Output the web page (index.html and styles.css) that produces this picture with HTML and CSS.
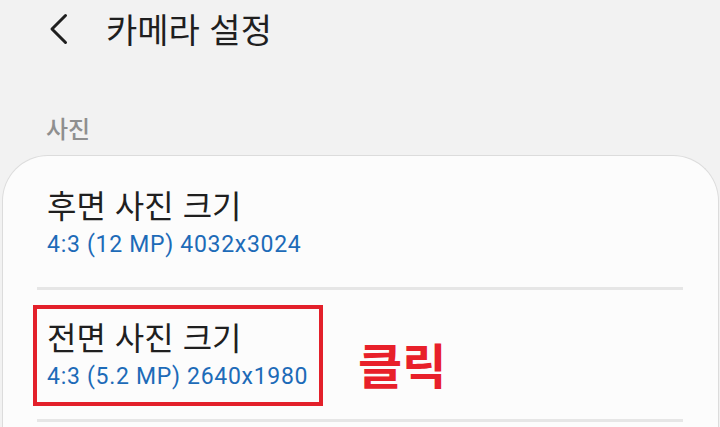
FILE: index.html
```html
<!DOCTYPE html>
<html lang="ko">
<head>
<meta charset="utf-8">
<link rel="stylesheet" href="styles.css">
</head>
<body>
<header class="appbar">
  <svg class="back" width="20" height="32" viewBox="0 0 20 32"><polyline points="16.5,2.5 3,16 16.5,29.5" fill="none" stroke="#1f1f1f" stroke-width="3" stroke-linecap="round" stroke-linejoin="round"/></svg>
  <h1 class="title">카메라 설정</h1>
</header>
<div class="section-label">사진</div>
<div class="card">
  <div class="row row-first">
    <div class="row-title">후면 사진 크기</div>
    <div class="row-sub">4:3 (12 MP) 4032x3024</div>
  </div>
  <div class="divider"></div>
  <div class="row row-second">
    <div class="row-title">전면 사진 크기</div>
    <div class="row-sub">4:3 (5.2 MP) 2640x1980</div>
    <div class="highlight"></div>
    <div class="note">클릭</div>
  </div>
  <div class="divider"></div>
</div>
</body>
</html>
```
FILE: styles.css
```css
html, body {
  margin: 0;
  padding: 0;
  background: #f2f2f2;
  width: 720px;
  height: 427px;
  overflow: hidden;
  font-family: "Noto Sans CJK KR", "Noto Sans", sans-serif;
}
.appbar {
  height: 58px;
  display: flex;
  align-items: center;
  padding-left: 49px;
}
.back {
  display: block;
}
.title {
  margin: 0 0 0 37px;
  font-size: 34px;
  font-weight: 400;
  color: #1f1f1f;
  line-height: 1;
}
.section-label {
  margin-top: 58px;
  padding-left: 46px;
  font-size: 24px;
  line-height: 24px;
  color: #8f8f8f;
  font-weight: 500;
}
.card {
  margin: 15px 1px 0 2px;
  background: #fcfcfc;
  border: 1px solid #dcdcdc;
  border-bottom: none;
  border-radius: 46px 46px 0 0;
  padding-bottom: 6px;
}
.row {
  position: relative;
  box-sizing: border-box;
  padding: 0 44px;
}
.row-first {
  height: 131px;
  padding-top: 28px;
}
.row-second {
  height: 129px;
  padding-top: 26px;
}
.row-title {
  font-size: 32px;
  line-height: 40px;
  color: #1f1f1f;
}
.row-sub {
  margin-top: 7px;
  font-family: Roboto, "Noto Sans", sans-serif;
  font-size: 23px;
  line-height: 28px;
  color: #1d6bb8;
  letter-spacing: 0.7px;
}
.divider {
  height: 3px;
  background: #e6e6e6;
  margin: 0 35px 0 34px;
}
.highlight {
  position: absolute;
  left: 30px;
  top: 15px;
  width: 282px;
  height: 93px;
  border: 4px solid #e3202a;
}
.note {
  position: absolute;
  left: 355px;
  top: 48px;
  font-size: 48px;
  line-height: 50px;
  font-weight: 700;
  color: #e8202a;
}
```
